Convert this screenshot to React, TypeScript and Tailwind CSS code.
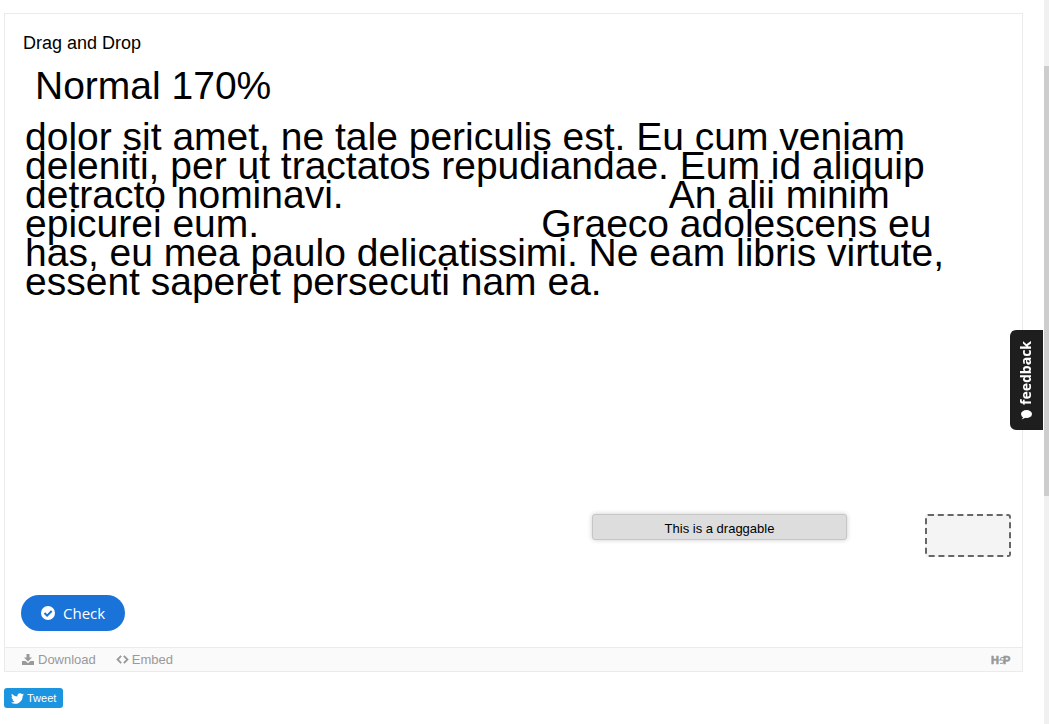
import { FaTwitter } from "react-icons/fa";

function H5PLogo() {
  return (
    <svg
      viewBox="0 0 20 10"
      className="h-[10px] w-5 font-['Liberation_Sans',sans-serif] font-bold"
      role="img"
      aria-label="H5P"
      fill="#999999"
      stroke="#999999"
    >
      <text x="0" y="9" fontSize="11" strokeWidth="0.6">H</text>
      <text x="12" y="9" fontSize="11" strokeWidth="0.6">P</text>
      <path d="M13 2.500H10L9.500 5H7.500M9.500 5h1.500a1.700 1.700 0 0 1 0 3.400H9" fill="none" strokeWidth="1" />
    </svg>
  );
}

function ActionBar() {
  return (
    <footer className="flex h-6 items-center border-t border-[#ebebeb] bg-[#fafafa] pr-[11px] pl-[17px] text-[13px] text-[#999999]">
      <button type="button" className="flex items-center gap-1">
        <svg viewBox="0 0 12 11" className="h-[11px] w-3" fill="currentColor">
          <path d="M4.5 0h3v3.5H10L6 7.5 2 3.5h2.5z" />
          <path d="M0 7h3.5L6 9.2 8.500 7H12v4H0z" />
        </svg>
        Download
      </button>
      <button type="button" className="ml-5 flex items-center gap-[3px]">
        <svg viewBox="0 0 14 10" className="h-[9px] w-[13px]" fill="none" stroke="currentColor" strokeWidth="2">
          <path d="M5.5 1L1.5 5l4 4M8.5 1l4 4-4 4" />
        </svg>
        Embed
      </button>
      <a href="#h5p" className="ml-auto">
        <H5PLogo />
      </a>
    </footer>
  );
}

export default function App() {
  return (
    <div className="flex min-h-screen bg-white font-['Liberation_Sans',Arial,sans-serif] text-black">
      <main className="min-w-0 flex-1 pt-[13px] pr-[21px] pl-1">
        <section className="border border-[#ebebeb]">
          <div className="px-[18px] pt-[17px]">
            <h1 className="text-lg leading-6">Drag and Drop</h1>
            <p className="mt-[9px] px-3 text-[39px] leading-[44px]">Normal 170%</p>
            <p className="mt-[14px] pr-8 pl-0.5 text-[39px] leading-[29px]">
              dolor sit amet, ne tale periculis est. Eu cum veniam
              <br />
              deleniti, per ut tractatos repudiandae. Eum id aliquip
              <br />
              detracto nominavi.
              <span className="inline-block w-[325px]" />
              An alii minim
              <br />
              epicurei eum.
              <span className="inline-block w-[282px]" />
              Graeco adolescens eu
              <br />
              has, eu mea paulo delicatissimi. Ne eam libris virtute,
              <br />
              essent saperet persecuti nam ea.
            </p>
          </div>

          <div className="mt-[218px] flex items-start justify-end gap-[78px] pr-[11px]">
            <button
              type="button"
              draggable
              className="h-[26px] w-[255px] rounded-[3px] border border-[#c6c6c6] bg-[#dddddd] pt-[3px] text-[13px] shadow-[0_0_5px_rgba(0,0,0,0.2)]"
            >
              This is a draggable
            </button>
            <div className="h-[43px] w-[86px] rounded-[3px] border-2 border-dashed border-[#666666] bg-[#f4f4f4]" />
          </div>

          <div className="px-4 pt-[38px] pb-4">
            <button
              type="button"
              className="flex h-9 items-center gap-2 rounded-full bg-[#1a73d9] px-5 font-['Open_Sans',sans-serif] text-[15px] text-white"
            >
              <svg viewBox="0 0 14 14" className="h-[14px] w-[14px]">
                <circle cx="7" cy="7" r="7" fill="currentColor" />
                <path d="M3.500 7l2.600 2.600 4.600-4.600" fill="none" stroke="#1a73d9" strokeWidth="2" />
              </svg>
              Check
            </button>
          </div>
          <ActionBar />
        </section>

        <a
          href="#tweet"
          className="mt-4 inline-flex h-5 items-center gap-[3px] rounded-[3px] bg-[#1b95e0] px-[7px] text-[11px] text-white"
        >
          <FaTwitter className="h-[13px] w-[13px]" />
          Tweet
        </a>
      </main>

      <div className="w-[5px] shrink-0 bg-[#f0f0f0] pt-[66px]">
        <div className="h-[430px] bg-[#cdcdcd]" />
      </div>

      <button
        type="button"
        className="fixed top-[330px] right-[6px] flex h-[100px] w-[33px] rotate-180 items-center justify-center gap-1 rounded-r-md bg-[#1e1e1e] font-['Open_Sans',sans-serif] text-sm font-bold text-white [writing-mode:vertical-rl]"
      >
        <svg viewBox="0 0 11 11" className="h-[11px] w-[11px]" fill="currentColor">
          <ellipse cx="5.500" cy="6" rx="5.500" ry="4" />
          <path d="M6 2.500L10.500 0.500 9 2.500l1 2z" />
        </svg>
        feedback
      </button>
    </div>
  );
}
